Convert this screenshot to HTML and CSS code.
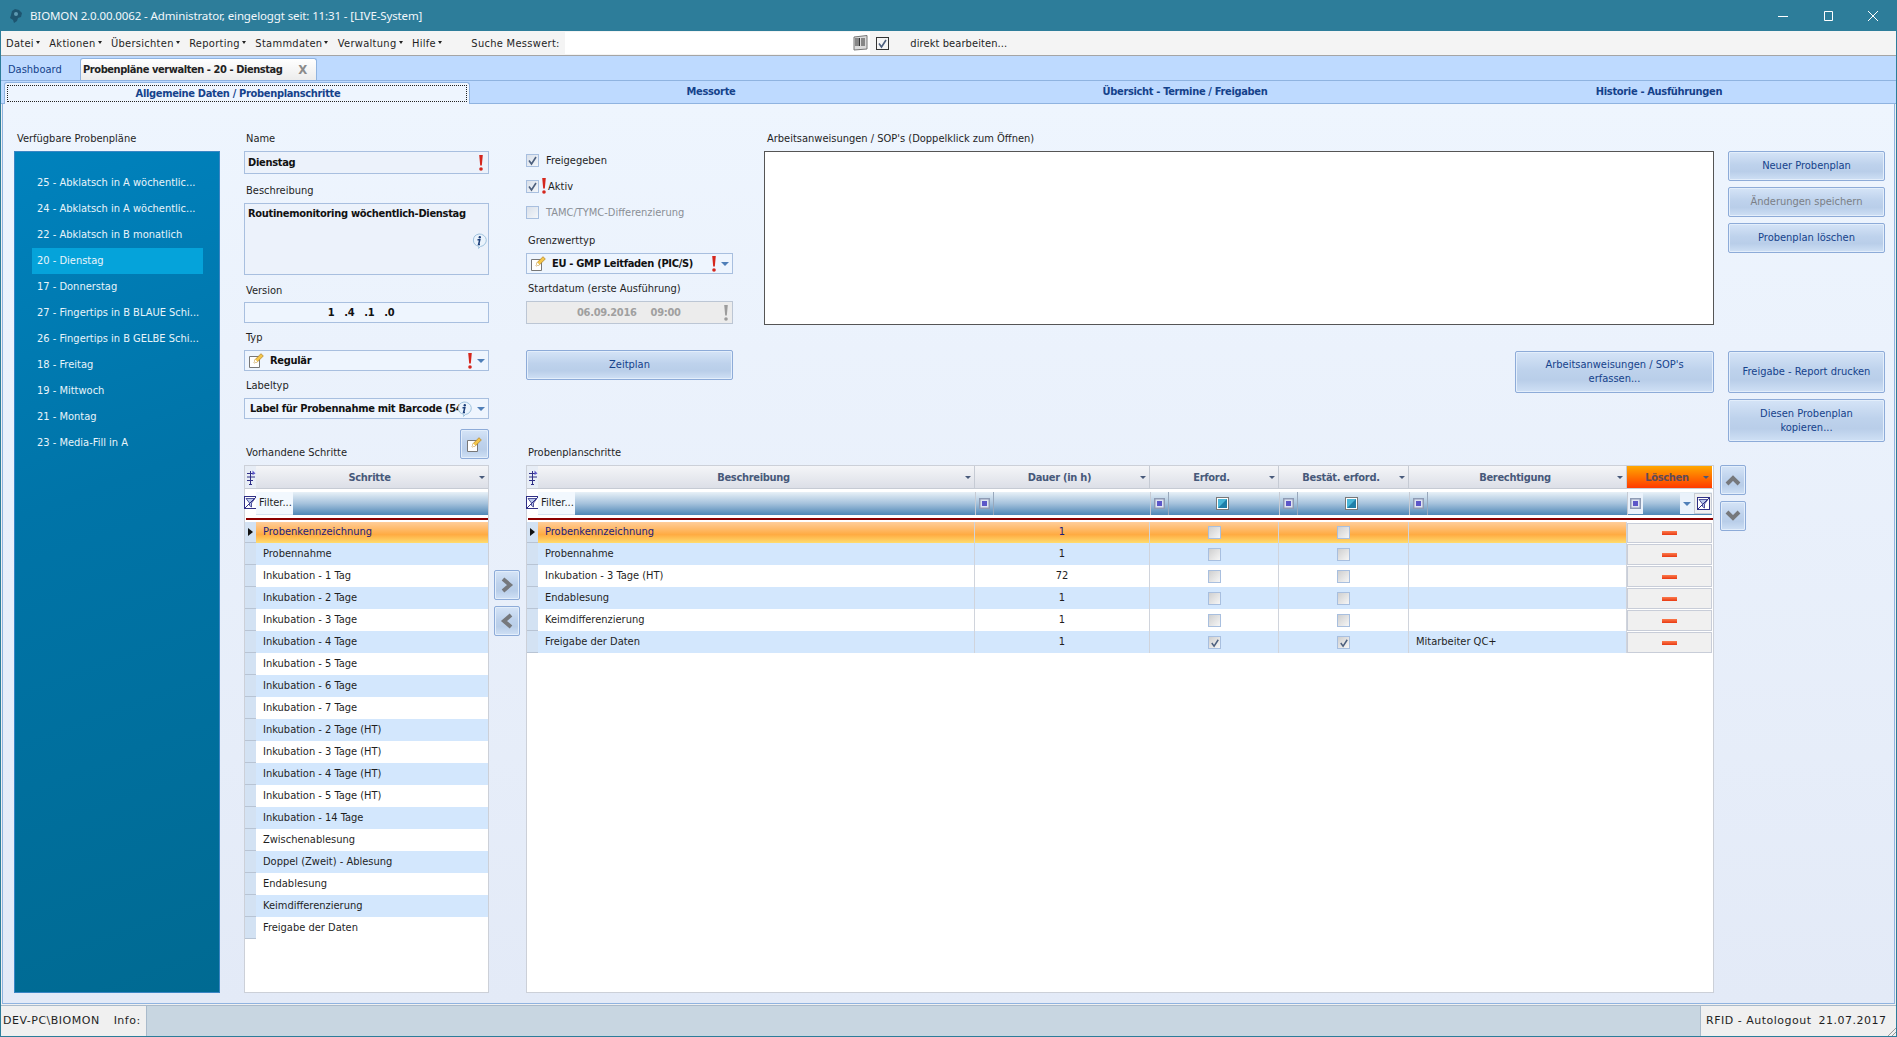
FILE: index.html
```html
<!DOCTYPE html>
<html>

<head>
    <title>BIOMON</title>
    <link rel="stylesheet" href="styles.css">
</head>

<body>
    <svg class="defs" width="0" height="0">
        <symbol id="bang" viewBox="0 0 6 16">
            <path d="M1.200 0h3.600L3.800 10.500H2.200z" fill="currentColor" />
            <circle cx="3" cy="14" r="1.800" fill="currentColor" />
        </symbol>
        <symbol id="page" viewBox="0 0 15 15">
            <path d="M.5 3.500h10v11H.5z" fill="#fff" stroke="#777" />
            <path d="M5 10l1.200-3.500L12 .7l2.300 2.300-5.800 5.800z" fill="#f4c64a" stroke="#b8862a" stroke-width=".8" />
            <path d="M5 10l1.200-3.500 2.300 2.300z" fill="#fff" />
        </symbol>
        <symbol id="info" viewBox="0 0 16 16">
            <path d="M8 1a7 6.300 0 0 1 1.500 12.500L7.500 15.500l.3-2.200A7 6.300 0 0 1 8 1z" fill="#eaf3fc" stroke="#9fc2dd" />
            <circle cx="8.800" cy="4.200" r="1.200" fill="#1d3f7a" />
            <path d="M6.500 6.800h2.300L7.600 11.500h1.400" fill="none" stroke="#1d3f7a" stroke-width="1.500" />
        </symbol>
        <symbol id="tick" viewBox="0 0 13 13">
            <path d="M3 6.500l2.500 3.500L10 3" fill="none" stroke="#4c5f7d" stroke-width="1.600" />
        </symbol>
        <symbol id="funnel" viewBox="0 0 13 13">
            <rect x=".5" y=".5" width="12" height="12" fill="#fff" stroke="#2f2f86" />
            <path d="M2 2.500h9L7.500 7v4l-2-1.500V7z" fill="#b9c8ec" stroke="#2f2f86" stroke-width=".8" />
            <path d="M1 12L12 1" stroke="#2f2f86" />
        </symbol>
        <symbol id="cols" viewBox="0 0 10 16">
            <path d="M1 4.500h6M1 8h8M1 11.500h6M4.500 2v13M3 15.500h3" fill="none" stroke="#2f2f86" />
            <path d="M6.500 1.500l3 3-3 1.500z" fill="#5c56c8" />
        </symbol>
        <symbol id="sq" viewBox="0 0 11 11">
            <rect width="11" height="11" fill="#8e9bb4" />
            <rect x="1.500" y="1.500" width="8" height="8" fill="#dfe4f2" />
            <rect x="3" y="3" width="5" height="5" fill="#5c56c8" />
        </symbol>
        <symbol id="teal" viewBox="0 0 13 13">
            <rect x=".5" y=".5" width="12" height="12" fill="#fff" stroke="#777" />
            <rect x="2" y="2" width="9" height="9" fill="#1f7fa8" />
            <path d="M2 2h9L2 11z" fill="#49b6d8" />
        </symbol>
    </svg>

    <div class="window">
        <div class="titlebar">
            <svg class="app-icon" width="14" height="16" viewBox="0 0 14 16">
                <path d="M3 3l3-2 4 1 3 3-1 4-3 1-1 3-3 2-1-3-3-2 1-3z" fill="#1e5570" />
                <circle cx="7" cy="6" r="2" fill="#5f9ab3" />
            </svg>
            <span class="title-text">BIOMON 2.0.00.0062 - Administrator, eingeloggt seit: 11:31 - [LIVE-System]</span>
            <div class="controls">
                <svg width="12" height="12" viewBox="0 0 12 12"><path d="M1 6.500h10" stroke="#fff" /></svg>
                <svg width="12" height="12" viewBox="0 0 12 12"><path d="M2.500 1.500h8v9h-8z" fill="none" stroke="#fff" /></svg>
                <svg width="12" height="12" viewBox="0 0 12 12"><path d="M1 1l10 10M11 1L1 11" stroke="#fff" /></svg>
            </div>
        </div>

        <div class="menubar">
            <span class="menu">Datei</span>
            <span class="menu">Aktionen</span>
            <span class="menu">Übersichten</span>
            <span class="menu">Reporting</span>
            <span class="menu">Stammdaten</span>
            <span class="menu">Verwaltung</span>
            <span class="menu">Hilfe</span>
            <span class="search-label">Suche Messwert:</span>
            <div class="search-box">
                <svg width="16" height="16" viewBox="0 0 16 16">
                    <path d="M1 2l13-1.500V14L1 15z" fill="#dcdcdc" stroke="#777" />
                    <path d="M3 3v8M5 3v8M6.500 3v8M9 3v8M11 3v8" stroke="#333" />
                </svg>
            </div>
            <span class="big-check"><svg width="13" height="13"><use href="#tick" /></svg></span>
            <span class="direct">direkt bearbeiten...</span>
        </div>

        <div class="tabstrip">
            <span class="tab-plain">Dashboard</span>
            <span class="tab-active"><span>Probenpläne verwalten - 20 - Dienstag</span><b class="tab-x">X</b></span>
        </div>

        <div class="subtabs">
            <div class="subtab-active"><span class="focus">Allgemeine Daten / Probenplanschritte</span></div>
            <span class="subtab">Messorte</span>
            <span class="subtab">Übersicht - Termine / Freigaben</span>
            <span class="subtab">Historie - Ausführungen</span>
        </div>

        <div class="main">
            <div class="plans">
                <div class="label">Verfügbare Probenpläne</div>
                <div class="plan-list">
                    <div class="plan">25 - Abklatsch in A wöchentlic...</div>
                    <div class="plan">24 - Abklatsch in A wöchentlic...</div>
                    <div class="plan">22 - Abklatsch in B monatlich</div>
                    <div class="plan selected">20 - Dienstag</div>
                    <div class="plan">17 - Donnerstag</div>
                    <div class="plan">27 - Fingertips in B BLAUE Schi...</div>
                    <div class="plan">26 - Fingertips in B GELBE Schi...</div>
                    <div class="plan">18 - Freitag</div>
                    <div class="plan">19 - Mittwoch</div>
                    <div class="plan">21 - Montag</div>
                    <div class="plan">23 - Media-Fill in A</div>
                </div>
            </div>

            <div class="steps-col">
                <div class="label">Name</div>
                <div class="field name-field"><b>Dienstag</b><svg class="bang" width="6" height="16"><use href="#bang" /></svg></div>
                <div class="label label-gap">Beschreibung</div>
                <div class="field desc-field">
                    <b>Routinemonitoring wöchentlich-Dienstag</b>
                    <svg class="info-over" width="16" height="16"><use href="#info" /></svg>
                </div>
                <div class="label version-label">Version</div>
                <div class="field version-field"><b>1</b><b>.4</b><b>.1</b><b>.0</b></div>
                <div class="label combo-label">Typ</div>
                <div class="field combo">
                    <svg width="15" height="15"><use href="#page" /></svg>
                    <b class="combo-text">Regulär</b>
                    <svg class="bang" width="6" height="16"><use href="#bang" /></svg>
                    <i class="drop"></i>
                </div>
                <div class="label combo-label">Labeltyp</div>
                <div class="field combo label-combo">
                    <b class="combo-text clip">Label für Probennahme mit Barcode (54</b>
                    <svg width="16" height="16"><use href="#info" /></svg>
                    <i class="drop"></i>
                </div>
                <div class="steps-head">
                    <div class="label">Vorhandene Schritte</div>
                    <button class="btn edit-btn"><svg width="15" height="15"><use href="#page" /></svg></button>
                </div>
                <div class="grid">
                    <div class="grid-head left-cols">
                        <div class="corner"><svg width="10" height="16"><use href="#cols" /></svg></div>
                        <div class="head-cell">Schritte<i class="drop small"></i></div>
                    </div>
                    <div class="filter-row left-cols">
                        <div class="corner-f"><svg width="13" height="13"><use href="#funnel" /></svg></div>
                        <div class="filter-cell"><span class="filter-input">Filter...</span></div>
                    </div>
                    <div class="red-line"></div>
                    <div class="row left-cols current"><div class="ind"><i class="arrow"></i></div><div class="cell">Probenkennzeichnung</div></div>
                    <div class="row left-cols odd"><div class="ind"></div><div class="cell">Probennahme</div></div>
                    <div class="row left-cols"><div class="ind"></div><div class="cell">Inkubation - 1 Tag</div></div>
                    <div class="row left-cols odd"><div class="ind"></div><div class="cell">Inkubation - 2 Tage</div></div>
                    <div class="row left-cols"><div class="ind"></div><div class="cell">Inkubation - 3 Tage</div></div>
                    <div class="row left-cols odd"><div class="ind"></div><div class="cell">Inkubation - 4 Tage</div></div>
                    <div class="row left-cols"><div class="ind"></div><div class="cell">Inkubation - 5 Tage</div></div>
                    <div class="row left-cols odd"><div class="ind"></div><div class="cell">Inkubation - 6 Tage</div></div>
                    <div class="row left-cols"><div class="ind"></div><div class="cell">Inkubation - 7 Tage</div></div>
                    <div class="row left-cols odd"><div class="ind"></div><div class="cell">Inkubation - 2 Tage (HT)</div></div>
                    <div class="row left-cols"><div class="ind"></div><div class="cell">Inkubation - 3 Tage (HT)</div></div>
                    <div class="row left-cols odd"><div class="ind"></div><div class="cell">Inkubation - 4 Tage (HT)</div></div>
                    <div class="row left-cols"><div class="ind"></div><div class="cell">Inkubation - 5 Tage (HT)</div></div>
                    <div class="row left-cols odd"><div class="ind"></div><div class="cell">Inkubation - 14 Tage</div></div>
                    <div class="row left-cols"><div class="ind"></div><div class="cell">Zwischenablesung</div></div>
                    <div class="row left-cols odd"><div class="ind"></div><div class="cell">Doppel (Zweit) - Ablesung</div></div>
                    <div class="row left-cols"><div class="ind"></div><div class="cell">Endablesung</div></div>
                    <div class="row left-cols odd"><div class="ind"></div><div class="cell">Keimdifferenzierung</div></div>
                    <div class="row left-cols"><div class="ind"></div><div class="cell">Freigabe der Daten</div></div>
                </div>
            </div>

            <div class="right-part">
                <div class="top">
                    <div class="options">
                        <div class="check-row"><span class="chk"><svg width="13" height="13"><use href="#tick" /></svg></span><span class="chk-label">Freigegeben</span></div>
                        <div class="check-row"><span class="chk"><svg width="13" height="13"><use href="#tick" /></svg></span><svg class="bang-inline" width="6" height="16"><use href="#bang" /></svg><span>Aktiv</span></div>
                        <div class="check-row disabled"><span class="chk"></span><span class="chk-label">TAMC/TYMC-Differenzierung</span></div>
                        <div class="label grenz-label">Grenzwerttyp</div>
                        <div class="field combo">
                            <svg width="15" height="15"><use href="#page" /></svg>
                            <b class="combo-text">EU - GMP Leitfaden (PIC/S)</b>
                            <svg class="bang" width="6" height="16"><use href="#bang" /></svg>
                            <i class="drop"></i>
                        </div>
                        <div class="label combo-label">Startdatum (erste Ausführung)</div>
                        <div class="field date-field">
                            <b class="date-text">06.09.2016</b>
                            <b class="time-text">09:00</b>
                            <svg class="bang" width="6" height="16"><use href="#bang" /></svg>
                        </div>
                        <button class="btn zeitplan">Zeitplan</button>
                    </div>

                    <div class="sop">
                        <div class="label sop-label">Arbeitsanweisungen / SOP's (Doppelklick zum Öffnen)</div>
                        <div class="sop-box"></div>
                        <button class="btn sop-btn">Arbeitsanweisungen / SOP's<br>erfassen...</button>
                    </div>

                    <div class="actions">
                        <button class="btn act">Neuer Probenplan</button>
                        <button class="btn act off">Änderungen speichern</button>
                        <button class="btn act">Probenplan löschen</button>
                        <button class="btn act report">Freigabe - Report drucken</button>
                        <button class="btn act tall">Diesen Probenplan<br>kopieren...</button>
                    </div>
                </div>

                <div class="bottom">
                    <div class="move">
                        <button class="btn arrow-btn"><svg width="14" height="16" viewBox="0 0 14 16"><path d="M3 2l7 6-7 6" fill="none" stroke="#76787c" stroke-width="4" /></svg></button>
                        <button class="btn arrow-btn"><svg width="14" height="16" viewBox="0 0 14 16"><path d="M11 2L4 8l7 6" fill="none" stroke="#76787c" stroke-width="4" /></svg></button>
                    </div>

                    <div class="plan-steps">
                        <div class="label">Probenplanschritte</div>
                        <div class="grid">
                            <div class="grid-head right-cols">
                                <div class="corner"><svg width="10" height="16"><use href="#cols" /></svg></div>
                                <div class="head-cell">Beschreibung<i class="drop small"></i></div>
                                <div class="head-cell">Dauer (in h)<i class="drop small"></i></div>
                                <div class="head-cell">Erford.<i class="drop small"></i></div>
                                <div class="head-cell">Bestät. erford.<i class="drop small"></i></div>
                                <div class="head-cell">Berechtigung<i class="drop small"></i></div>
                                <div class="head-cell delete-head">Löschen<i class="drop small"></i></div>
                            </div>
                            <div class="filter-row right-cols">
                                <div class="corner-f"><svg width="13" height="13"><use href="#funnel" /></svg></div>
                                <div class="filter-cell"><span class="filter-input">Filter...</span></div>
                                <div class="filter-cell sep"><span class="sq-box"><svg width="11" height="11"><use href="#sq" /></svg></span></div>
                                <div class="filter-cell sep"><span class="sq-box"><svg width="11" height="11"><use href="#sq" /></svg></span><svg class="teal" width="13" height="13"><use href="#teal" /></svg></div>
                                <div class="filter-cell sep"><span class="sq-box"><svg width="11" height="11"><use href="#sq" /></svg></span><svg class="teal" width="13" height="13"><use href="#teal" /></svg></div>
                                <div class="filter-cell sep"><span class="sq-box"><svg width="11" height="11"><use href="#sq" /></svg></span></div>
                                <div class="filter-cell sep del-filter">
                                    <span class="del-sq"><svg width="11" height="11"><use href="#sq" /></svg></span>
                                    <span class="del-drop"><i class="drop"></i></span>
                                    <span class="del-fn"><svg width="13" height="13"><use href="#funnel" /></svg></span>
                                </div>
                            </div>
                            <div class="red-line"></div>

                            <div class="row right-cols current">
                                <div class="ind"><i class="arrow"></i></div><div class="cell">Probenkennzeichnung</div><div class="cell num">1</div>
                                <div class="cell box"><span class="mini"></span></div><div class="cell box"><span class="mini"></span></div><div class="cell"></div>
                                <div class="cell del"><i class="minus"></i></div>
                            </div>
                            <div class="row right-cols odd">
                                <div class="ind"></div><div class="cell">Probennahme</div><div class="cell num">1</div>
                                <div class="cell box"><span class="mini"></span></div><div class="cell box"><span class="mini"></span></div><div class="cell"></div>
                                <div class="cell del"><i class="minus"></i></div>
                            </div>
                            <div class="row right-cols">
                                <div class="ind"></div><div class="cell">Inkubation - 3 Tage (HT)</div><div class="cell num">72</div>
                                <div class="cell box"><span class="mini"></span></div><div class="cell box"><span class="mini"></span></div><div class="cell"></div>
                                <div class="cell del"><i class="minus"></i></div>
                            </div>
                            <div class="row right-cols odd">
                                <div class="ind"></div><div class="cell">Endablesung</div><div class="cell num">1</div>
                                <div class="cell box"><span class="mini"></span></div><div class="cell box"><span class="mini"></span></div><div class="cell"></div>
                                <div class="cell del"><i class="minus"></i></div>
                            </div>
                            <div class="row right-cols">
                                <div class="ind"></div><div class="cell">Keimdifferenzierung</div><div class="cell num">1</div>
                                <div class="cell box"><span class="mini"></span></div><div class="cell box"><span class="mini"></span></div><div class="cell"></div>
                                <div class="cell del"><i class="minus"></i></div>
                            </div>
                            <div class="row right-cols odd">
                                <div class="ind"></div><div class="cell">Freigabe der Daten</div><div class="cell num">1</div>
                                <div class="cell box"><span class="mini"><svg width="12" height="12"><use href="#tick" /></svg></span></div>
                                <div class="cell box"><span class="mini"><svg width="12" height="12"><use href="#tick" /></svg></span></div>
                                <div class="cell">Mitarbeiter QC+</div>
                                <div class="cell del"><i class="minus"></i></div>
                            </div>
                        </div>
                    </div>

                    <div class="updown">
                        <button class="btn arrow-btn"><svg width="16" height="14" viewBox="0 0 16 14"><path d="M2 11l6-6 6 6" fill="none" stroke="#76787c" stroke-width="4" /></svg></button>
                        <button class="btn arrow-btn"><svg width="16" height="14" viewBox="0 0 16 14"><path d="M2 3l6 6 6-6" fill="none" stroke="#76787c" stroke-width="4" /></svg></button>
                    </div>
                </div>
            </div>
        </div>

        <div class="statusbar">
            <div class="status-left"><span>DEV-PC\BIOMON</span><span>Info:</span></div>
            <div class="status-mid"></div>
            <div class="status-right"><span>RFID - Autologout</span><span>21.07.2017</span><i class="grip"></i></div>
        </div>
    </div>
</body>

</html>
```

FILE: styles.css
```css
* {
    box-sizing: border-box;
}

html,
body {
    margin: 0;
    height: 100%;
    overflow: hidden;
}

body {
    font-family: "DejaVu Sans", sans-serif;
    font-stretch: condensed;
    font-size: 11px;
    color: #1f1f1f;
}

b {
    letter-spacing: -.3px;
}

.defs {
    position: absolute;
}

svg {
    display: block;
    flex: none;
}

.window {
    height: 1037px;
    display: flex;
    flex-direction: column;
    border: solid #2d7d9a;
    border-width: 0 1px 1px;
    background: #f0f0f0;
}

/* title bar */
.titlebar {
    height: 31px;
    margin: 0 -1px;
    display: flex;
    align-items: center;
    padding-left: 9px;
    background: #2d7d9a;
    color: #f2f7fa;
}

.title-text {
    margin-left: 7px;
    font-family: "Noto Sans", sans-serif;
    font-stretch: normal;
    font-size: 11.5px;
    letter-spacing: -.12px;
}

.controls {
    margin-left: auto;
    display: flex;
    gap: 33px;
    padding-right: 18px;
}

/* menu */
.menubar {
    height: 25px;
    display: flex;
    align-items: center;
    background: #f4f4f4;
    border-bottom: 1px solid #a5a5a5;
    padding: 1px 0 0 5px;
    letter-spacing: .3px;
}

.menu {
    margin-right: 15.4px;
    position: relative;
}

.menu:after {
    content: "";
    position: absolute;
    right: -6px;
    top: 4px;
    border: 2px solid transparent;
    border-top: 3px solid #222;
}

.search-label {
    margin-left: 20px;
    width: 94px;
}

.search-box {
    width: 305px;
    height: 22px;
    margin-top: -1px;
    background: #fff;
    display: flex;
    align-items: center;
    justify-content: flex-end;
    padding-right: 1px;
}

.big-check {
    width: 13px;
    height: 13px;
    margin: -1px 0 0 6px;
    border: 1px solid #333;
}

.big-check svg {
    margin: -1px;
}

.direct {
    margin-left: 21px;
    letter-spacing: .1px;
}

/* tabs */
.tabstrip {
    height: 25px;
    display: flex;
    align-items: flex-end;
    background: #bedaff;
    border-bottom: 1px solid #8fb3e0;
    padding-left: 1px;
}

.tab-plain {
    width: 78px;
    padding-left: 6px;
    height: 21px;
    line-height: 22px;
    color: #15428b;
}

.tab-active {
    width: 237px;
    height: 22px;
    display: flex;
    justify-content: space-between;
    line-height: 22px;
    padding: 0 9px 0 2px;
    font-weight: 700;
    letter-spacing: -.43px;
    color: #222;
    background: linear-gradient(#fff, #ececec);
    border: 1px solid #8fb3e0;
    border-bottom: 0;
    border-radius: 3px 3px 0 0;
}

.tab-x {
    font-size: 13px;
    color: #8b8b8b;
}

.subtabs {
    height: 23px;
    display: flex;
    align-items: flex-end;
    background: #bedaff;
    border-bottom: 1px solid #8fb3e0;
    padding-left: 3px;
    font-weight: 700;
    letter-spacing: -.33px;
    color: #15428b;
}

.subtab-active {
    width: 466px;
    height: 22px;
    padding: 2px;
    margin-bottom: -1px;
    margin-right: 4px;
    background: #eef5fe;
    border: 1px solid #8fb3e0;
    border-bottom: 0;
    border-radius: 3px 3px 0 0;
}

.focus {
    display: block;
    height: 17px;
    line-height: 16px;
    padding-left: 2px;
    text-align: center;
    border: 1px dotted #222;
}

.subtab {
    width: 474px;
    height: 22px;
    line-height: 22px;
    text-align: center;
}

/* main area */
.main {
    flex: 1;
    min-height: 0;
    display: flex;
    margin: 0 1px;
    padding: 27px 0 10px 11px;
    background: linear-gradient(#eef5fe, #e3eaf7);
    border: solid #8fb3e0;
    border-width: 0 1px 1px;
}

.label {
    height: 14px;
    line-height: 16px;
    margin-bottom: 6px;
    padding-left: 2px;
}

.plans {
    width: 206px;
    margin-right: 24px;
    display: flex;
    flex-direction: column;
}

.plans .label {
    padding-left: 3px;
}

.plan-list {
    flex: 1;
    padding: 18px 16px 0 17px;
    background: linear-gradient(160deg, #0082bd, #0074a8 40%, #006a92);
    border: 1px solid #3a86c4;
}

.plan {
    height: 26px;
    line-height: 26px;
    padding-left: 5px;
    color: #e8f4fa;
    white-space: nowrap;
}

.plan.selected {
    background: #05a3da;
}

.steps-col {
    width: 245px;
    display: flex;
    flex-direction: column;
}

.field {
    position: relative;
    display: flex;
    align-items: center;
    border: 1px solid #a8bfdf;
    background: #ecf2fb;
    color: #111;
    padding: 0 3px;
}

.bang {
    color: #d5261c;
    margin-left: auto;
}

.name-field {
    height: 23px;
}

.name-field .bang {
    margin-right: 1px;
}

.label-gap {
    margin-top: 9px;
}

.desc-field {
    height: 72px;
    align-items: flex-start;
    padding-top: 3px;
}

.info-over {
    position: absolute;
    right: 1px;
    top: 29px;
}

.version-label {
    margin-top: 8px;
    margin-bottom: 5px;
}

.version-field {
    height: 21px;
    justify-content: center;
    gap: 10px;
    padding-right: 14px;
    background: #eef5fe;
}

.combo-label {
    margin-top: 7px;
}

.combo {
    height: 21px;
    padding: 0 3px 0 4px;
    background: #eef5fe;
}

.combo-text {
    margin-left: 6px;
}

.combo .bang {
    margin-right: 4px;
}

.drop {
    display: block;
    width: 0;
    height: 0;
    border: 4px solid transparent;
    border-top: 4px solid #4f7fb8;
    border-bottom: 0;
    flex: none;
}

.label-combo .combo-text {
    margin-left: 0;
}

.clip {
    width: 207px;
    white-space: nowrap;
    padding-left: 1px;
}

.label-combo .drop {
    margin-left: 5px;
}

.btn {
    font: inherit;
    font-stretch: inherit;
    color: #15428b;
    padding: 0;
    border: 1px solid #8dabd8;
    border-radius: 2px;
    background: linear-gradient(#d5e4f7, #bed2ec 45%, #b9cee9 70%, #cfe0f5);
    box-shadow: inset 0 0 0 1px #e3eefb;
    display: flex;
    align-items: center;
    justify-content: center;
    text-align: center;
    line-height: 14px;
}

.steps-head {
    height: 30px;
    margin-top: 10px;
    margin-bottom: 6px;
    display: flex;
    align-items: flex-end;
    justify-content: space-between;
}

.steps-head .label {
    margin-bottom: 0;
}

.edit-btn {
    width: 29px;
    height: 30px;
}

/* data grids */
.grid {
    flex: 1;
    min-height: 0;
    background: #fff;
    border: 1px solid #ccd0d8;
}

.left-cols {
    display: grid;
    grid-template-columns: 11px 1fr;
}

.right-cols {
    display: grid;
    grid-template-columns: 11px 437px 175px 129px 130px 218px 85px;
}

.grid-head {
    height: 23px;
    border-bottom: 1px solid #c6cbd4;
}

.corner {
    background: #e7edf6;
    display: flex;
    justify-content: center;
    align-items: center;
}

.head-cell {
    position: relative;
    display: flex;
    align-items: center;
    justify-content: center;
    padding-right: 5px;
    font-weight: 700;
    letter-spacing: -.3px;
    color: #47597a;
    background: linear-gradient(#f4f5f8, #dcdfe7);
    border-right: 1px solid #c6cbd4;
}

.head-cell:last-child {
    border-right: 0;
}

.drop.small {
    position: absolute;
    right: 3px;
    top: 10px;
    border-width: 3px;
    border-bottom: 0;
    border-top-color: #47597a;
}

.delete-head {
    color: #5d4a5a;
    background: linear-gradient(#ffa800, #ff3a00);
}

.filter-row {
    height: 29px;
    padding: 3px 0;
    background: #fff;
}

.corner-f {
    padding-top: 4px;
    background: #fff;
}

.corner-f svg {
    margin-left: -1px;
}

.filter-cell {
    display: flex;
    align-items: center;
    height: 23px;
    background: linear-gradient(#e8f1f8, #a5c2dc 50%, #4f87b6);
}

.filter-input {
    width: 37px;
    height: 23px;
    line-height: 21px;
    padding-left: 3px;
    background: #f2f8fe;
    border-bottom: 1px solid #d5e3f0;
}

.sep {
    border-left: 1px solid #c6cbd4;
}

.sq-box {
    width: 18px;
    height: 23px;
    display: flex;
    align-items: center;
    justify-content: center;
    border-right: 1px solid #98a8bc;
}

.teal {
    margin-left: 47px;
}

.del-sq {
    width: 15px;
    height: 21px;
    background: #eaf2fb;
    display: flex;
    align-items: center;
    justify-content: center;
}

.del-drop {
    width: 14px;
    height: 21px;
    margin-left: auto;
    background: #eaf2fb;
    display: flex;
    align-items: center;
    justify-content: center;
}

.del-fn {
    width: 18px;
    height: 21px;
    background: #f0f0f0;
    border: 1px solid #c6cbd4;
    display: flex;
    align-items: center;
    justify-content: center;
}

.red-line {
    height: 2px;
    margin: 0 0 2px 1px;
    background: #8b0000;
}

.row {
    height: 22px;
}

.row.current {
    height: 21px;
}

.ind {
    background: #d3e2f3;
    border-bottom: 1px solid #b8c4d4;
    display: flex;
    align-items: center;
    justify-content: center;
}

.arrow {
    display: block;
    border: 4px solid transparent;
    border-left: 5px solid #111;
    border-right: 0;
}

.cell {
    line-height: 22px;
    padding-left: 7px;
    border-right: 1px solid #d0d4dc;
    overflow: hidden;
    white-space: nowrap;
}

.left-cols .cell {
    border-right: 0;
}

.odd .cell {
    background: #d3e7fd;
}

.current .cell {
    line-height: 20px;
    color: #1c1c7a;
    background: linear-gradient(#ffcd9a, #ffab42 60%, #ffdc6e);
}

.num {
    text-align: center;
    padding-left: 0;
}

.box {
    padding-left: 0;
    display: flex;
    justify-content: center;
    align-items: center;
}

.mini {
    width: 13px;
    height: 13px;
    display: block;
    border: 1px solid #a8bfdf;
    background: linear-gradient(135deg, #cfcfcf, #f6f6f6);
}

.row .del {
    display: flex;
    align-items: center;
    justify-content: center;
    padding: 0;
    margin: 1px 0 0;
    background: #f0f0f0;
    border: 1px solid #c8cdd8;
}

.minus {
    display: block;
    width: 15px;
    height: 4px;
    background: linear-gradient(#fb7a4c, #e93a12);
}

/* right part */
.right-part {
    flex: 1;
    min-width: 0;
    display: flex;
    flex-direction: column;
}

.top {
    height: 314px;
    flex: none;
    display: flex;
    padding-left: 37px;
}

.options {
    width: 207px;
    margin-right: 31px;
    padding-top: 16px;
}

.check-row {
    height: 26px;
    display: flex;
    align-items: center;
}

.chk {
    width: 13px;
    height: 13px;
    border: 1px solid #a8bfdf;
    background: linear-gradient(135deg, #d9e0ea, #f3f6fa);
}

.chk svg {
    margin: -1px;
}

.chk-label {
    margin-left: 7px;
}

.bang-inline {
    color: #d5261c;
    margin: 0 1px 0 2px;
}

.disabled {
    color: #8a8f96;
}

.grenz-label {
    margin-top: 8px;
}

.date-field {
    height: 23px;
    background: #ececec;
    border-color: #bcc6d4;
}

.date-text {
    margin-left: 47px;
    color: #a0a0a0;
}

.time-text {
    margin-left: 14px;
    color: #a0a0a0;
}

.date-field .bang {
    color: #9c9c9c;
}

.zeitplan {
    width: 207px;
    height: 30px;
    margin-top: 26px;
}

.sop {
    width: 950px;
    margin-right: 14px;
    display: flex;
    flex-direction: column;
}

.sop-label {
    padding-left: 3px;
}

.sop-box {
    height: 174px;
    background: #fff;
    border: 1px solid #555;
}

.sop-btn {
    align-self: flex-end;
    width: 199px;
    height: 42px;
    margin-top: 26px;
}

.actions {
    width: 157px;
    padding-top: 20px;
    display: flex;
    flex-direction: column;
    gap: 6px;
}

.act {
    height: 30px;
    flex: none;
}

.tall {
    height: 43px;
}

.report {
    height: 42px;
    margin-top: 92px;
}

.off {
    color: #7b7f86;
}

.bottom {
    flex: 1;
    min-height: 0;
    display: flex;
}

.move {
    width: 37px;
    padding: 125px 0 0 5px;
    display: flex;
    flex-direction: column;
    gap: 6px;
}

.arrow-btn {
    width: 26px;
    height: 30px;
    flex: none;
}

.plan-steps {
    width: 1188px;
    display: flex;
    flex-direction: column;
}

.updown {
    padding: 20px 0 0 6px;
    display: flex;
    flex-direction: column;
    gap: 6px;
}

/* status bar */
.statusbar {
    height: 31px;
    flex: none;
    margin-top: 1px;
    display: flex;
    background: #c8d6e1;
    border-top: 1px solid #a9bacb;
    font-stretch: normal;
    letter-spacing: .5px;
}

.status-left {
    width: 146px;
    display: flex;
    align-items: center;
    gap: 14px;
    padding: 0 0 2px 2px;
    background: #f0f0f0;
    border-right: 1px solid #a9bacb;
}

.status-mid {
    flex: 1;
}

.status-right {
    width: 196px;
    position: relative;
    display: flex;
    align-items: center;
    gap: 7px;
    padding: 0 0 2px 5px;
    background: #f0f0f0;
    border-left: 1px solid #a9bacb;
}

.grip {
    position: absolute;
    right: 0;
    bottom: 0;
    width: 10px;
    height: 10px;
    background: repeating-linear-gradient(135deg, transparent 0 2px, #9a9a9a 2px 3px);
    clip-path: polygon(100% 0, 100% 100%, 0 100%);
}
```
